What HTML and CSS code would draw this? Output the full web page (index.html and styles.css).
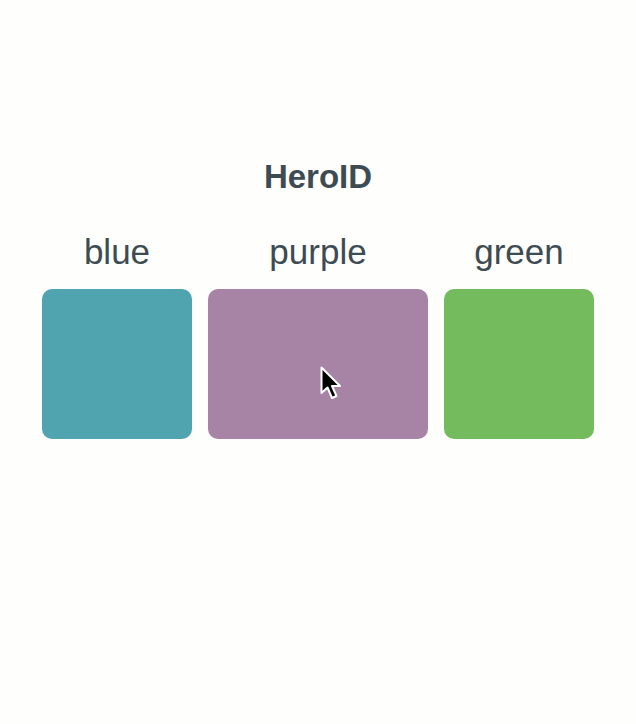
FILE: index.html
```html
<!DOCTYPE html>
<html>
<head>
<meta charset="utf-8">
<link rel="stylesheet" href="styles.css">
</head>
<body>
<main class="page">
  <h1 class="title">HeroID</h1>
  <div class="row">
    <div class="item">
      <div class="label">blue</div>
      <div class="box box-blue"></div>
    </div>
    <div class="item">
      <div class="label">purple</div>
      <div class="box box-purple wide">
        <svg class="cursor" width="24" height="36" viewBox="0 0 24 36">
          <path d="M1.5 1.5 L1.5 27 L7.5 21.5 L12 32 L16.5 30 L12 20 L20 20 Z" fill="#000" stroke="#fff" stroke-width="2" stroke-linejoin="round"/>
        </svg>
      </div>
    </div>
    <div class="item">
      <div class="label">green</div>
      <div class="box box-green"></div>
    </div>
  </div>
</main>
</body>
</html>
```
FILE: styles.css
```css
html, body {
  margin: 0;
  padding: 0;
  background: #fefefd;
}
body {
  width: 636px;
  height: 724px;
  font-family: "Liberation Sans", Arial, sans-serif;
  color: #3d4b52;
}
.page {
  display: flex;
  flex-direction: column;
  align-items: center;
  padding-top: 159px;
}
.title {
  margin: 0;
  font-size: 33px;
  font-weight: bold;
  line-height: 36px;
}
.row {
  display: flex;
  gap: 16px;
  margin-top: 39px;
}
.item {
  display: flex;
  flex-direction: column;
  align-items: center;
}
.label {
  font-size: 35px;
  line-height: 36px;
  margin-bottom: 19px;
}
.box {
  width: 150px;
  height: 150px;
  border-radius: 10px;
  position: relative;
}
.wide {
  width: 220px;
}
.box-blue { background: #50a4b0; }
.box-purple { background: #a784a5; }
.box-green { background: #73bb5c; }
.cursor {
  position: absolute;
  left: 112px;
  top: 77px;
}
```
